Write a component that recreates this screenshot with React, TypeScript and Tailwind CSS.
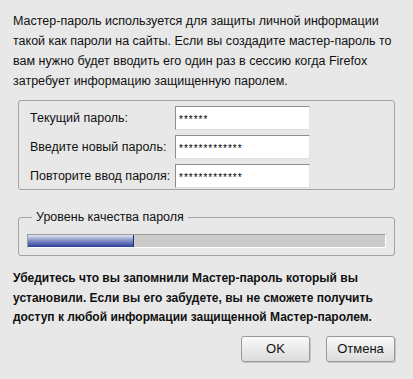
import React from 'react';

// Password field with GTK-like inset frame
function PasswordField({ count }: { count: number }) {
  return (
    <div className="flex h-[24px] w-[135px] items-center border border-t-[#8e8e8e] border-l-[#8e8e8e] border-r-[#e0e0e0] border-b-[#e0e0e0] bg-white pl-[3px]">
      <span className="pt-[4px] text-[10px] leading-[10px] tracking-[1px] text-black">{'*'.repeat(count)}</span>
    </div>
  );
}

function DialogButton({ label }: { label: string }) {
  return (
    <button className="h-[26px] w-[69px] rounded-[3px] border border-[#9a9a9a] bg-gradient-to-b from-[#f9f9f9] to-[#dcdcdc] text-[13px] text-[#111] shadow-[1px_1px_0_#c4c4c4]">
      {label}
    </button>
  );
}

export default function App() {
  const rows = [
    { label: 'Текущий пароль:', count: 6 },
    { label: 'Введите новый пароль:', count: 13 },
    { label: 'Повторите ввод пароля:', count: 13 },
  ];

  return (
    <div
      className="flex h-[379px] w-[413px] flex-col overflow-hidden bg-[#e8e8e8] text-[#111]"
      style={{ fontFamily: '"Liberation Sans", Arial, sans-serif' }}
    >
      <p className="px-[13px] pt-[11px] text-[12.5px] leading-[20px]">
        Мастер-пароль используется для защиты личной информации такой как пароли на сайты. Если вы создадите
        мастер-пароль то вам нужно будет вводить его один раз в сессию когда Firefox затребует информацию
        защищенную паролем.
      </p>

      <div className="mx-[18px] mt-[9px] flex flex-col gap-[5px] rounded-[3px] border border-[#a2a2a2] pb-[1px] pl-[11px] pt-[5px]">
        {rows.map((r) => (
          <div key={r.label} className="flex items-center">
            <span className="w-[145px] text-[12.5px]">{r.label}</span>
            <PasswordField count={r.count} />
          </div>
        ))}
      </div>

      <fieldset className="mx-[18px] mt-[20px] rounded-[3px] border border-[#a2a2a2] px-[8px] pb-[7px]">
        <legend className="ml-[5px] px-[4px] text-[12.5px] leading-[14px]">Уровень качества пароля</legend>
        <div className="mt-[10px] flex h-[14px] border border-t-[#9c9c9c] border-l-[#9c9c9c] border-r-white border-b-white bg-[#cbccc9]">
          <div className="h-full w-[106px] border-r border-[#1f2f86] bg-gradient-to-b from-[#e4e7f2] via-[#7d8ac4] to-[#2a3d9c]" />
        </div>
      </fieldset>

      <p className="px-[13px] pt-[13px] text-[12px] font-bold leading-[19.5px]">
        Убедитесь что вы запомнили Мастер-пароль который вы установили. Если вы его забудете, вы не сможете
        получить доступ к любой информации защищенной Мастер-паролем.
      </p>

      <div className="mt-[8px] flex justify-end gap-[16px] pr-[18px]">
        <DialogButton label="OK" />
        <DialogButton label="Отмена" />
      </div>
    </div>
  );
}
